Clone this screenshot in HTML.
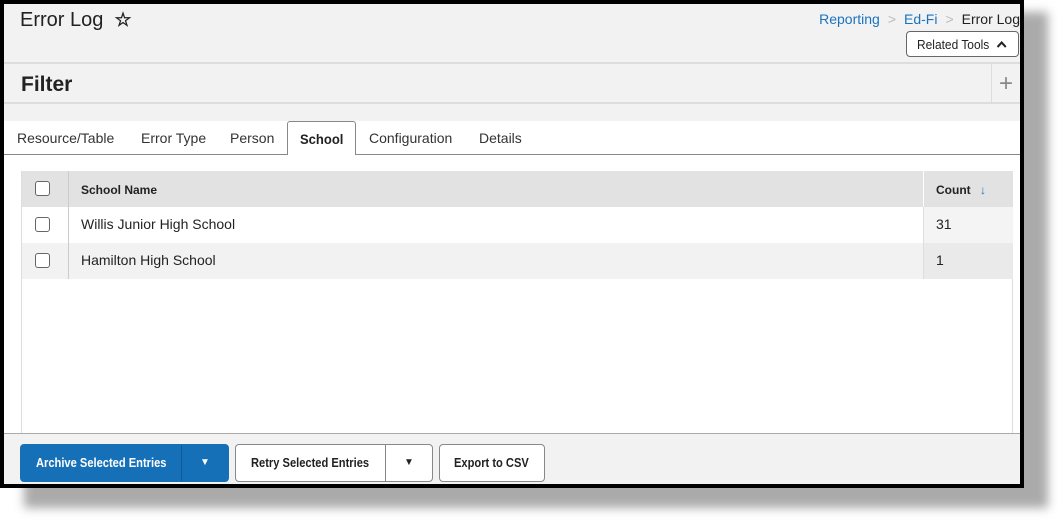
<!DOCTYPE html>
<html><head><style>
*{box-sizing:border-box;margin:0;padding:0}
body{width:1058px;height:522px;background:#fff;position:relative;overflow:hidden;font-family:"Liberation Sans",sans-serif;color:#222}
.shadow{position:absolute;left:24px;top:12px;width:1024px;height:496px;background:#aaa;filter:blur(5px)}
.frame{position:absolute;left:0;top:0;width:1024px;height:488px;background:#000}
.page{position:absolute;left:4px;top:4px;width:1016px;height:480px;background:#f2f2f2;overflow:hidden}
.abs{position:absolute}
.title{left:16px;top:5px;font-size:20px;color:#222}
.crumb{right:0;top:7px;font-size:14px;white-space:nowrap}
.crumb a{color:#1a73c0;text-decoration:none}
.crumb .s{color:#bbb;margin:0 8px}
.rt{left:902px;top:27px;width:113px;height:26px;border:1px solid #666;border-radius:4px;background:#fff;font-size:13px;padding:5px 0 0 10px}
.sq{display:inline-block;transform:scaleX(.89);transform-origin:left;white-space:nowrap}
.filter{left:0;top:58px;width:1016px;height:42px;border-top:2px solid #ddd;border-bottom:2px solid #ddd;background:#f2f2f2}
.filter b{position:absolute;left:17px;top:9px;font-size:21px}
.plus{position:absolute;left:987px;top:0;width:29px;height:40px;border-left:1px solid #ddd;font-size:24px;color:#888;text-align:center;line-height:40px}
.tabs{left:0;top:117px;width:1016px;height:34px;background:#fff;border-bottom:1px solid #888}
.tab{position:absolute;top:9px;font-size:14px;color:#333}
.tabsel{position:absolute;left:283px;top:0;width:69px;height:35px;border:1px solid #888;border-bottom:none;background:#fff;border-radius:3px 3px 0 0;font-weight:bold;font-size:14px;padding:9px 0 0 12px}
.content{left:0;top:151px;width:1016px;height:278px;background:#fff}
.table{left:17px;top:16px;width:992px;height:262px;border-left:1px solid #ddd;border-right:1px solid #ddd}
.row{position:absolute;left:0;width:991px;height:36px;font-size:14px}
.cb{position:absolute;left:13px;top:10px;width:15px;height:15px;border:1px solid #666;border-radius:3px;background:#fff}
.c1{position:absolute;left:46px;top:0;height:36px;border-left:1px solid #ccc}
.cnt{position:absolute;left:901px;top:0;width:90px;height:36px;border-left:1px solid #ddd}
.bottom{left:0;top:429px;width:1016px;height:51px;background:#f2f2f2;border-top:1px solid #aaa}
.btn{position:absolute;top:10px;height:38px;border:1px solid #888;border-radius:4px;background:#fff;font-size:12.5px;font-weight:bold;color:#222}
</style></head><body>
<div class="shadow"></div>
<div class="frame"></div>
<div class="page">
<div class="abs title">Error Log&nbsp; <span style="font-size:19px;font-weight:bold">☆</span></div>
<div class="abs crumb"><a>Reporting</a><span class="s">&gt;</span><a>Ed-Fi</a><span class="s">&gt;</span>Error Log</div>
<div class="abs rt"><span class="sq" style="transform:scaleX(.92)">Related Tools&nbsp; <svg width="12" height="9" viewBox="0 0 12 9" style="vertical-align:0"><path d="M1.5 7 L6 2.5 L10.5 7" fill="none" stroke="#222" stroke-width="2.2"/></svg></span></div>
<div class="abs filter"><b>Filter</b><div class="plus">+</div></div>
<div class="abs tabs">
<span class="tab" style="left:13px">Resource/Table</span>
<span class="tab" style="left:137px">Error Type</span>
<span class="tab" style="left:226px">Person</span>
<div class="tabsel"><span class="sq" style="transform:scaleX(.93)">School</span></div>
<span class="tab" style="left:365px">Configuration</span>
<span class="tab" style="left:475px">Details</span>
</div>
<div class="abs content">
<div class="abs table">
<div class="row" style="top:0;background:#e2e2e2;font-weight:bold;font-size:12px"><div class="cb"></div><div class="c1" style="padding:12px 12px">School Name</div><div class="cnt" style="border-left-color:#fff;padding:12px 12px">Count <span style="color:#1a73c0;margin-left:6px">↓</span></div></div>
<div class="row" style="top:36px;background:#fff"><div class="cb"></div><div class="c1" style="padding:9px 12px">Willis Junior High School</div><div class="cnt" style="background:#f4f4f4;padding:9px 12px">31</div></div>
<div class="row" style="top:72px;background:#f2f2f2"><div class="cb"></div><div class="c1" style="padding:9px 12px">Hamilton High School</div><div class="cnt" style="background:#eaeaea;padding:9px 12px">1</div></div>
</div>
</div>
<div class="abs bottom">
<div class="btn" style="left:16px;width:209px;background:#1670b8;border-color:#1670b8;color:#fff"><span class="sq" style="position:absolute;left:15px;top:11px">Archive Selected Entries</span><span style="position:absolute;left:160px;top:0;height:36px;border-left:1px solid #0d5a96;width:47px;text-align:center;line-height:36px;font-size:10px">▼</span></div>
<div class="btn" style="left:231px;width:198px"><span class="sq" style="position:absolute;left:15px;top:11px">Retry Selected Entries</span><span style="position:absolute;left:149px;top:0;height:36px;border-left:1px solid #888;width:47px;text-align:center;line-height:36px;font-size:10px">▼</span></div>
<div class="btn" style="left:435px;width:106px"><span class="sq" style="position:absolute;left:14px;top:11px">Export to CSV</span></div>
</div>
</div>
</body></html>
